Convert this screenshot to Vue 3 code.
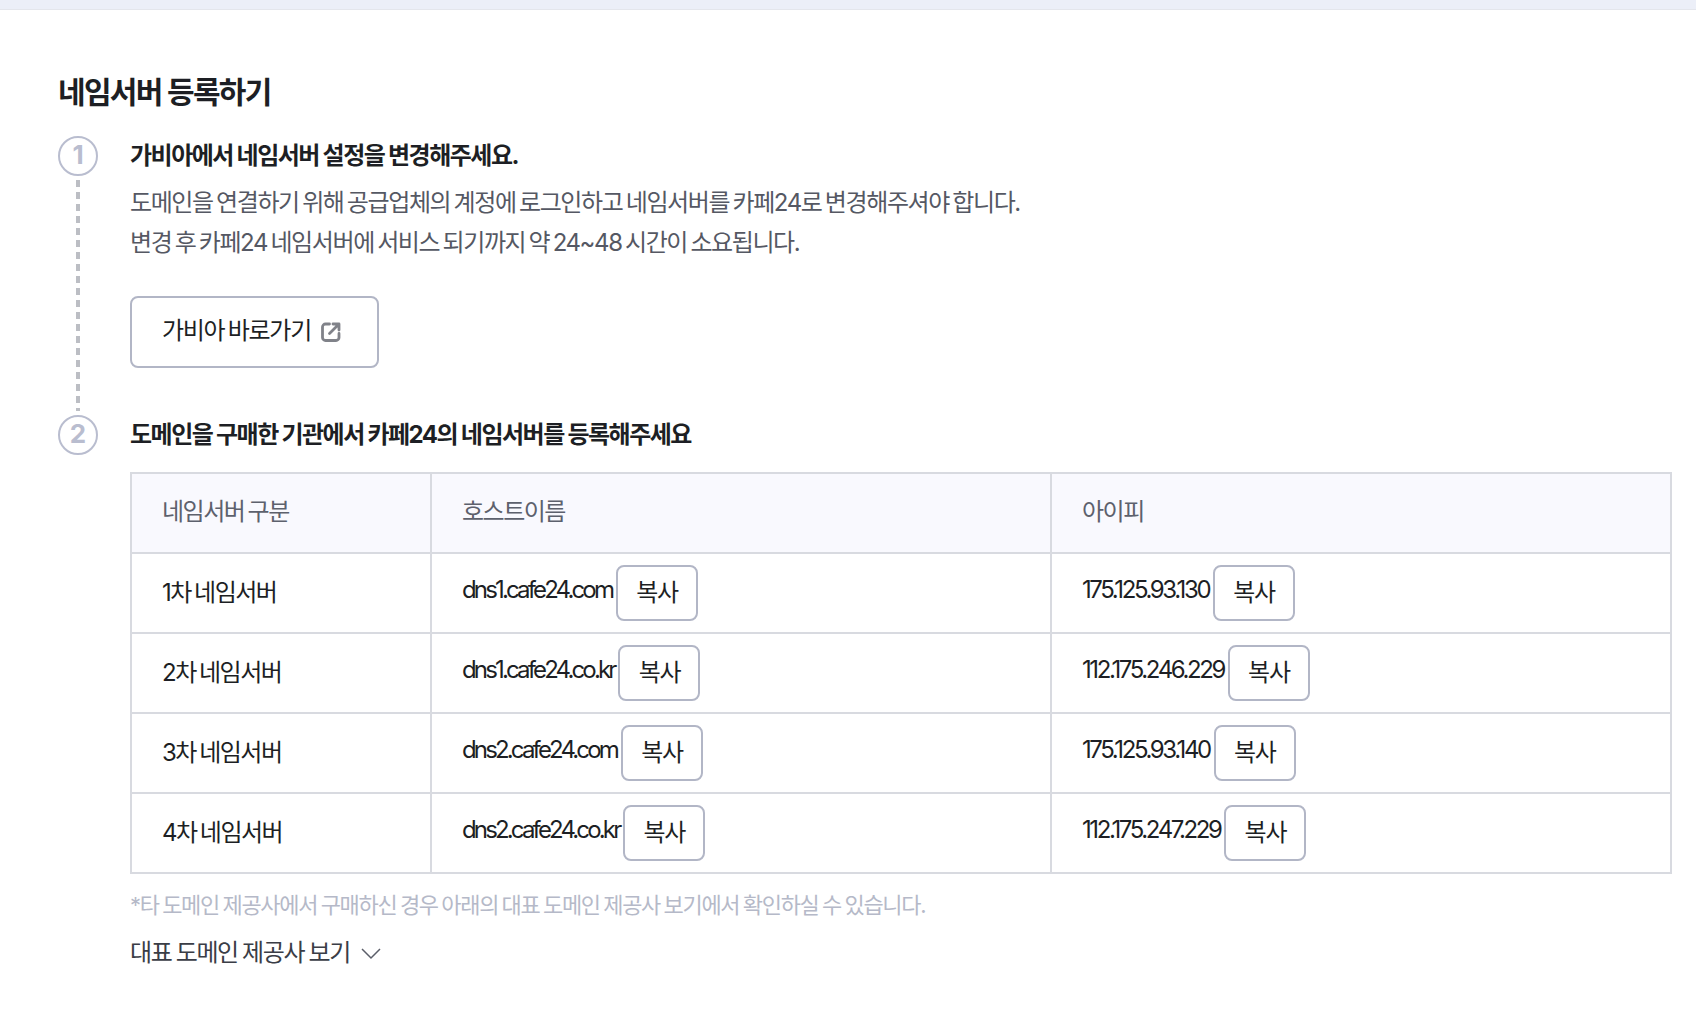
<template>
  <div class="page">
    <div class="top-bar"></div>
    <section class="ns-section">
      <h2 class="ns-title">네임서버 등록하기</h2>

      <div class="step step-first">
        <div class="step-mark">
          <span class="step-num">1</span>
          <span class="step-line"></span>
        </div>
        <div class="step-body">
          <h3 class="step-title">가비아에서 네임서버 설정을 변경해주세요.</h3>
          <p class="step-desc">도메인을 연결하기 위해 공급업체의 계정에 로그인하고 네임서버를 카페24로 변경해주셔야 합니다.<br />변경 후 카페24 네임서버에 서비스 되기까지 약 24~48 시간이 소요됩니다.</p>
          <a class="link-btn">
            <span class="link-text">가비아 바로가기</span>
            <svg width="22" height="22" viewBox="0 0 22 22" fill="none">
              <path d="M9.500 3H5.500A3 3 0 0 0 2.500 6v10.500a3 3 0 0 0 3 3H16a3 3 0 0 0 3-3V12.500" stroke="#808289" stroke-width="2.800" stroke-linecap="round" />
              <path d="M9.500 12.500L18.500 3.500M13 3h6v6" stroke="#808289" stroke-width="2.800" stroke-linecap="round" stroke-linejoin="round" />
            </svg>
          </a>
        </div>
      </div>

      <div class="step">
        <div class="step-mark">
          <span class="step-num">2</span>
        </div>
        <div class="step-body">
          <h3 class="step-title">도메인을 구매한 기관에서 카페24의 네임서버를 등록해주세요</h3>
          <table class="ns-table">
            <colgroup>
              <col class="col-a" />
              <col class="col-b" />
              <col />
            </colgroup>
            <thead>
              <tr>
                <th>네임서버 구분</th>
                <th>호스트이름</th>
                <th>아이피</th>
              </tr>
            </thead>
            <tbody>
              <tr v-for="row in servers" :key="row.name">
                <td>{{ row.name }}</td>
                <td>
                  <div class="cell">
                    <span class="val val-host">{{ row.host }}</span>
                    <button class="copy-btn">복사</button>
                  </div>
                </td>
                <td>
                  <div class="cell">
                    <span class="val">{{ row.ip }}</span>
                    <button class="copy-btn">복사</button>
                  </div>
                </td>
              </tr>
            </tbody>
          </table>
          <p class="note">*타 도메인 제공사에서 구매하신 경우 아래의 대표 도메인 제공사 보기에서 확인하실 수 있습니다.</p>
          <a class="more">
            <span>대표 도메인 제공사 보기</span>
            <svg width="22" height="14" viewBox="0 0 22 14" fill="none">
              <path d="M2 3l9 9 9-9" stroke="#5b5e69" stroke-width="1.500" />
            </svg>
          </a>
        </div>
      </div>
    </section>
  </div>
</template>

<script setup>
const servers = [
  { name: '1차 네임서버', host: 'dns1.cafe24.com', ip: '175.125.93.130' },
  { name: '2차 네임서버', host: 'dns1.cafe24.co.kr', ip: '112.175.246.229' },
  { name: '3차 네임서버', host: 'dns2.cafe24.com', ip: '175.125.93.140' },
  { name: '4차 네임서버', host: 'dns2.cafe24.co.kr', ip: '112.175.247.229' }
]
</script>

<style>
html,
body {
  background: #fff;
}
</style>

<style scoped>
.page {
  height: 1024px;
  overflow: hidden;
  font-family: Inter, "Noto Sans CJK KR", sans-serif;
  color: #1d1f24;
}

.top-bar {
  height: 9px;
  background: #eceff8;
  border-bottom: 1px solid #e4e6ec;
}

.ns-section {
  padding: 62px 24px 0 58px;
}

.ns-title {
  margin: 0 0 24px;
  font-size: 30px;
  line-height: 40px;
  font-weight: 700;
  letter-spacing: -1.700px;
}

.step {
  display: flex;
}

.step-mark {
  flex: none;
  width: 72px;
  display: flex;
  flex-direction: column;
}

.step-num {
  flex: none;
  box-sizing: border-box;
  width: 40px;
  height: 40px;
  border: 2px solid #b9bdcf;
  border-radius: 50%;
  text-align: center;
  font-size: 26px;
  line-height: 34px;
  font-weight: 700;
  color: #b9bdcf;
}

.step-line {
  flex: 1;
  width: 4px;
  margin: 4px 0 4px 18px;
  background: repeating-linear-gradient(to bottom, #bcbec4 0, #bcbec4 7px, transparent 7px, transparent 12px);
}

.step-body {
  flex: 1;
  min-width: 0;
}

.step-title {
  margin: 0;
  padding-top: 1px;
  font-size: 24px;
  line-height: 38px;
  font-weight: 700;
  letter-spacing: -1.500px;
  word-spacing: -0.500px;
}

.step-desc {
  margin: 8px 0 0;
  font-size: 24px;
  line-height: 40px;
  letter-spacing: -1.400px;
  word-spacing: -2px;
  color: #555863;
}

.link-btn {
  box-sizing: border-box;
  width: 249px;
  height: 72px;
  margin: 33px 0 47px;
  padding-left: 30px;
  display: flex;
  align-items: center;
  gap: 9px;
  border: 2px solid #b2b6c6;
  border-radius: 8px;
  font-size: 24px;
  letter-spacing: -1.300px;
  word-spacing: -2px;
}

.link-text {
  padding-bottom: 8px;
}

.ns-table {
  width: 1542px;
  margin-top: 18px;
  border-collapse: collapse;
  table-layout: fixed;
  font-size: 24px;
  letter-spacing: -1.500px;
  word-spacing: -2px;
}

.col-a {
  width: 300px;
}

.col-b {
  width: 620px;
}

.ns-table th,
.ns-table td {
  height: 80px;
  box-sizing: border-box;
  padding: 0 0 0 30px;
  border: 2px solid #d8dae0;
  text-align: left;
  white-space: nowrap;
}

.ns-table th {
  padding-bottom: 8px;
  background: #f9f9fe;
  font-weight: 400;
  color: #5d616d;
}

.ns-table tbody td:first-child {
  padding-bottom: 6px;
}

.cell {
  display: flex;
  align-items: center;
  gap: 4px;
}

.val {
  padding-bottom: 8px;
  letter-spacing: -2.400px;
}

.val-host {
  letter-spacing: -2.850px;
}

.copy-btn {
  box-sizing: border-box;
  width: 82px;
  height: 56px;
  padding: 0 0 6px;
  background: #fff;
  border: 2px solid #b2b6c6;
  border-radius: 8px;
  font: inherit;
  color: inherit;
  letter-spacing: -1.300px;
}

.note {
  margin: 15px 0 0;
  font-size: 22px;
  line-height: 32px;
  letter-spacing: -1.300px;
  word-spacing: -1.400px;
  color: #b5b9c8;
}

.more {
  margin-top: 16px;
  display: flex;
  align-items: center;
  gap: 10px;
  font-size: 24px;
  line-height: 32px;
  letter-spacing: -1.400px;
  word-spacing: -1px;
  color: #3a3d46;
}
</style>
